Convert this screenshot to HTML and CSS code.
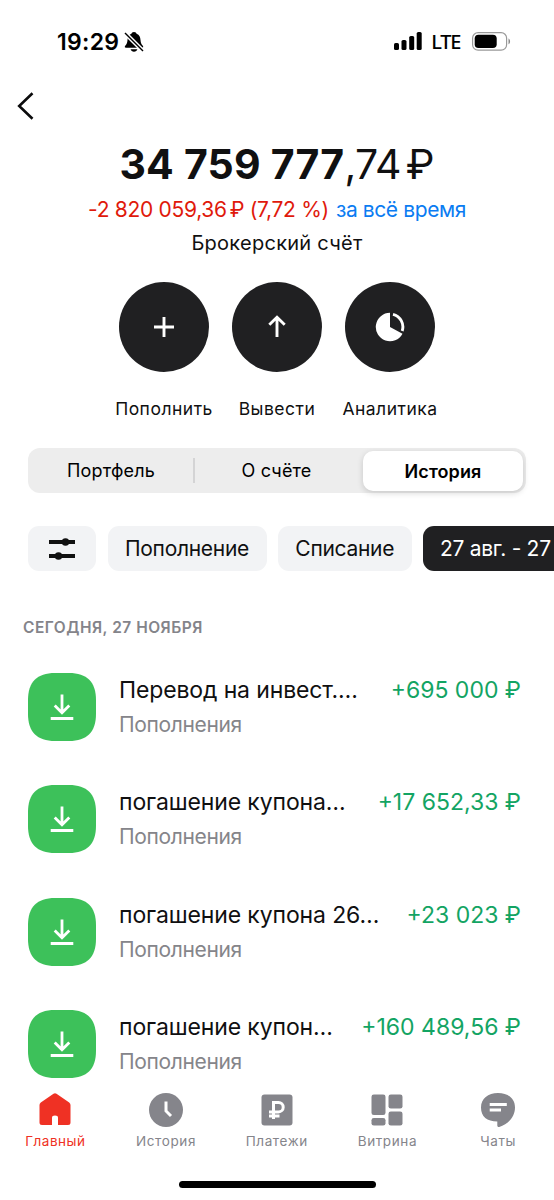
FILE: index.html
```html
<!DOCTYPE html>
<html lang="ru">
<head>
<meta charset="utf-8">
<title>Брокерский счёт</title>
<link rel="stylesheet" href="styles.css">
</head>
<body>
<svg class="defs" width="0" height="0">
  <symbol id="income" viewBox="0 0 68 68">
    <path fill="#3dc15a" d="M0 27C0 9 9 0 27 0H41C59 0 68 9 68 27V41C68 59 59 68 41 68H27C9 68 0 59 0 41Z"/>
    <path fill="none" stroke="#fff" stroke-width="2.8" d="M34 21.500V40M26.700 32.500L34 39.800L41.300 32.500M22.700 45.500H45.300"/>
  </symbol>
</svg>
<div class="screen">
  <header class="status">
    <div class="status-left">
      <span class="time">19:29</span>
      <svg class="bell" width="20" height="22" viewBox="0 0 20 22">
        <path d="M10 1C8.500 1 7.600 1.900 7.400 2.800C4.500 3.800 3.700 6.200 3.500 9C3.300 12 2.500 13.300 1.200 14.800C.4 15.900.8 16.800 2 16.800H18C19.200 16.800 19.600 15.900 18.800 14.800C17.500 13.300 16.700 12 16.500 9C16.300 6.200 15.500 3.800 12.600 2.800C12.400 1.900 11.500 1 10 1ZM6.600 18.300H13.400C13 19.900 11.700 20.700 10 20.700S7 19.900 6.600 18.300Z"/>
        <path d="M1 2L19 20" stroke="#fff" stroke-width="4.200"/>
        <path d="M1 2L19 20" stroke="#000" stroke-width="1.500"/>
      </svg>
    </div>
    <div class="status-right">
      <svg width="28" height="19" viewBox="0 0 28 19"><rect x="0" y="11" width="5" height="7" rx="1.600"/><rect x="7.500" y="8" width="5" height="10" rx="1.600"/><rect x="15.200" y="4" width="5" height="14" rx="1.600"/><rect x="22.700" y="0" width="5" height="18" rx="1.600"/></svg>
      <span class="net">LTE</span>
      <svg width="39" height="19" viewBox="0 0 39 19"><rect x=".6" y=".6" width="34" height="17.600" rx="5.500" fill="#fff" stroke="#999" stroke-width="1.200"/><rect x="2.700" y="2.700" width="22" height="13.300" rx="3.800"/><path d="M36.500 6.500C38.600 7.300 38.600 11.500 36.500 12.300Z" fill="#888"/></svg>
    </div>
  </header>
  <nav class="nav">
    <svg width="18" height="28" viewBox="0 0 18 28"><path d="M15.500 1.300L2.200 14L15.500 26.700" fill="none" stroke="#0b0b0c" stroke-width="2.600"/></svg>
  </nav>
  <section class="summary">
    <div class="amount"><b>34 759 777</b><span class="cents">,74</span><span class="rub">₽</span></div>
    <div class="change"><span class="loss">-2 820 059,36<span class="thin">₽</span> (7,72 %)</span><span class="period">за всё время</span></div>
    <div class="account">Брокерский счёт</div>
  </section>
  <section class="actions">
    <div class="action"><span class="disc"><svg width="30" height="30" viewBox="0 0 30 30"><path d="M15 5V25M5 15H25"/></svg></span><span>Пополнить</span></div>
    <div class="action"><span class="disc"><svg width="30" height="30" viewBox="0 0 30 30"><path d="M15 25V5.500M7.300 12.700L15 5.300L22.700 12.700"/></svg></span><span>Вывести</span></div>
    <div class="action"><span class="disc"><svg width="30" height="30" viewBox="0 0 30 30"><path class="pie" d="M15 15V.8A14.200 14.200 0 1 0 27.500 21.700Z"/><path class="arc" d="M18 2.300A13 13 0 0 1 27.200 19"/></svg></span><span>Аналитика</span></div>
  </section>
  <div class="tabs">
    <div class="tab">Портфель</div>
    <div class="rule"></div>
    <div class="tab">О счёте</div>
    <div class="tab active">История</div>
  </div>
  <div class="filters">
    <div class="chip icon"><svg width="26" height="22" viewBox="0 0 26 22"><path d="M0 4H26M0 18H26" stroke="#111" stroke-width="4"/><circle cx="16.500" cy="4" r="3.800" fill="#111"/><circle cx="9.500" cy="18" r="3.800" fill="#111"/></svg></div>
    <div class="chip c1">Пополнение</div>
    <div class="chip c2">Списание</div>
    <div class="chip dark">27 авг. - 27</div>
  </div>
  <h2 class="day">СЕГОДНЯ, 27 НОЯБРЯ</h2>
  <div class="list">
    <div class="row"><svg class="ico"><use href="#income"/></svg><div class="info"><div class="title">Перевод на инвест.…</div><div class="sub">Пополнения</div></div><div class="sum">+695 000 ₽</div></div>
    <div class="row"><svg class="ico"><use href="#income"/></svg><div class="info"><div class="title">погашение купона…</div><div class="sub">Пополнения</div></div><div class="sum">+17 652,33 ₽</div></div>
    <div class="row"><svg class="ico"><use href="#income"/></svg><div class="info"><div class="title">погашение купона 26…</div><div class="sub">Пополнения</div></div><div class="sum">+23 023 ₽</div></div>
    <div class="row"><svg class="ico"><use href="#income"/></svg><div class="info"><div class="title">погашение купон…</div><div class="sub">Пополнения</div></div><div class="sum">+160 489,56 ₽</div></div>
  </div>
  <footer class="bar">
    <div class="item on"><svg width="34" height="34" viewBox="0 0 34 34"><path d="M15.500.8Q17-.2 18.500.8L31.200 9.500Q32.500 10.500 32.500 12V29.500Q32.500 32 30 32H20V24.800Q20 22.500 17 22.500T14 24.800V32H4Q1.500 32 1.500 29.500V12Q1.500 10.500 2.800 9.500Z"/></svg><span>Главный</span></div>
    <div class="item"><svg width="34" height="34" viewBox="0 0 34 34"><circle cx="17" cy="17" r="17"/><path d="M17 8.500V18L22 23" fill="none" stroke="#fff" stroke-width="3"/></svg><span>История</span></div>
    <div class="item"><svg width="34" height="34" viewBox="0 0 34 34"><rect x="1.500" y="1.500" width="31" height="31" rx="3"/><path d="M13.500 26V9.500H18.500A4.700 4.700 0 0 1 18.500 18.900H9M9 23H19.500" fill="none" stroke="#fff" stroke-width="3"/></svg><span>Платежи</span></div>
    <div class="item"><svg width="34" height="34" viewBox="0 0 34 34"><rect x="1.500" y="1.500" width="14" height="20.500" rx="2.300"/><rect x="18.500" y="1.500" width="14" height="14" rx="2.300"/><rect x="1.500" y="25" width="14" height="7.500" rx="2.300"/><rect x="18.500" y="18.500" width="14" height="14" rx="2.300"/></svg><span>Витрина</span></div>
    <div class="item"><svg width="34" height="34" viewBox="0 0 34 34"><path d="M17 0C27 0 34 5.500 34 14.500C34 24 27 31.500 18.300 34Q16.300 34.300 16.300 32.500V28.500C6 28.500 0 23.500 0 14.500C0 5.500 7 0 17 0Z"/><path d="M8.700 11.500H25.800M8.700 17H20" stroke="#fff" stroke-width="3"/></svg><span>Чаты</span></div>
  </footer>
  <div class="home"></div>
</div>
</body>
</html>
```
FILE: styles.css
```css
* { box-sizing: border-box; }
body { margin: 0; background: #fff; color: #101011; font-family: Inter, "Open Sans", sans-serif; white-space: nowrap; }
svg { display: block; flex: none; }
.defs { position: absolute; }
.screen { width: 554px; height: 1200px; overflow: hidden; display: flex; flex-direction: column; }
.screen > * { flex: none; }
.status { height: 83px; display: flex; justify-content: space-between; align-items: center; padding: 0 43px 0 57px; }
.status-left, .status-right { display: flex; align-items: center; }
.status-left { gap: 5px; }
.time { font-size: 23px; font-weight: 600; line-height: 28px; color: #000; letter-spacing: .3px; }
.net { font: 500 20px/28px "Noto Sans", sans-serif; color: #000; letter-spacing: -1.3px; margin: 0 12px 0 9.500px; }
.nav { height: 56px; padding: 9px 17px; }
.amount { height: 50px; display: flex; justify-content: center; font-size: 41px; line-height: 50px; }
.amount b { font-weight: 700; letter-spacing: .2px; }
.cents { font-weight: 400; letter-spacing: -.7px; }
.rub { font-weight: 400; margin-left: 5px; }
.change { display: flex; justify-content: center; gap: 7px; height: 36px; font-size: 21px; line-height: 38px; margin-top: 2px; letter-spacing: -.3px; }
.loss { color: #e0190b; }
.thin { margin-left: 3px; }
.period { color: #0b7cf2; letter-spacing: -.4px; }
.account { text-align: center; font-size: 20px; line-height: 33px; height: 32px; letter-spacing: .27px; }
.actions { display: flex; justify-content: center; gap: 23px; margin-top: 23px; }
.action { width: 90px; display: flex; flex-direction: column; align-items: center; gap: 25px; font-size: 17.500px; line-height: 24px; letter-spacing: .5px; }
.disc { width: 90px; height: 90px; border-radius: 50%; background: #202022; display: flex; align-items: center; justify-content: center; }
.disc svg { fill: none; stroke: #fff; stroke-width: 2.900; }
.disc .pie { fill: #fff; stroke: none; }
.tabs { margin: 27px 28px 0; width: 498px; height: 45px; padding: 3px; border-radius: 12px; background: #ededed; display: flex; align-items: center; font-size: 18px; font-weight: 400; letter-spacing: .15px; color: #000; }
.tab { width: 160px; text-align: center; line-height: 41px; }
.tab.active { height: 40px; margin-left: auto; border-radius: 10px; background: #fff; font-weight: 600; letter-spacing: .1px; box-shadow: 0 2px 6px rgba(0,0,0,.16); }
.rule { width: 1.500px; height: 25px; background: #d4d4d5; margin: 0 2px; }
.filters { display: flex; gap: 11.500px; margin: 33px 0 0 28px; font-size: 21px; letter-spacing: -.3px; }
.chip { height: 45px; border-radius: 11px; background: #f2f3f5; display: flex; align-items: center; justify-content: center; flex: none; line-height: 46px; }
.chip.icon { width: 68px; }
.c1 { width: 159px; }
.c2 { width: 133.500px; }
.dark { background: #202022; color: #fff; width: 160px; justify-content: flex-start; padding-left: 17px; }
.day { margin: 46px 0 0 23px; font-size: 15.500px; font-weight: 600; line-height: 21px; color: #84848a; letter-spacing: .5px; }
.list { margin-top: 34.500px; display: flex; flex-direction: column; gap: 45.170px; }
.row { height: 67.500px; padding: 0 33px 0 28px; display: flex; align-items: flex-start; }
.ico { width: 68px; height: 68px; margin-right: 23px; }
.title, .sum { font-size: 23px; line-height: 35px; letter-spacing: -.13px; }
.info { flex: 1; }
.sub { font-size: 21px; line-height: 34px; color: #85858a; letter-spacing: -.35px; }
.sum { color: #13a463; letter-spacing: 0; }
.bar { display: flex; margin-top: 15px; }
.item { width: 110.700px; display: flex; flex-direction: column; align-items: center; fill: #85858b; color: #85858b; font-size: 13.500px; line-height: 20px; letter-spacing: .6px; gap: 4.500px; }
.item.on { fill: #ef3124; color: #ef3124; letter-spacing: .5px; }
.home { width: 197px; height: 7px; border-radius: 4px; background: #000; margin: 30px auto 0 179px; }
```
